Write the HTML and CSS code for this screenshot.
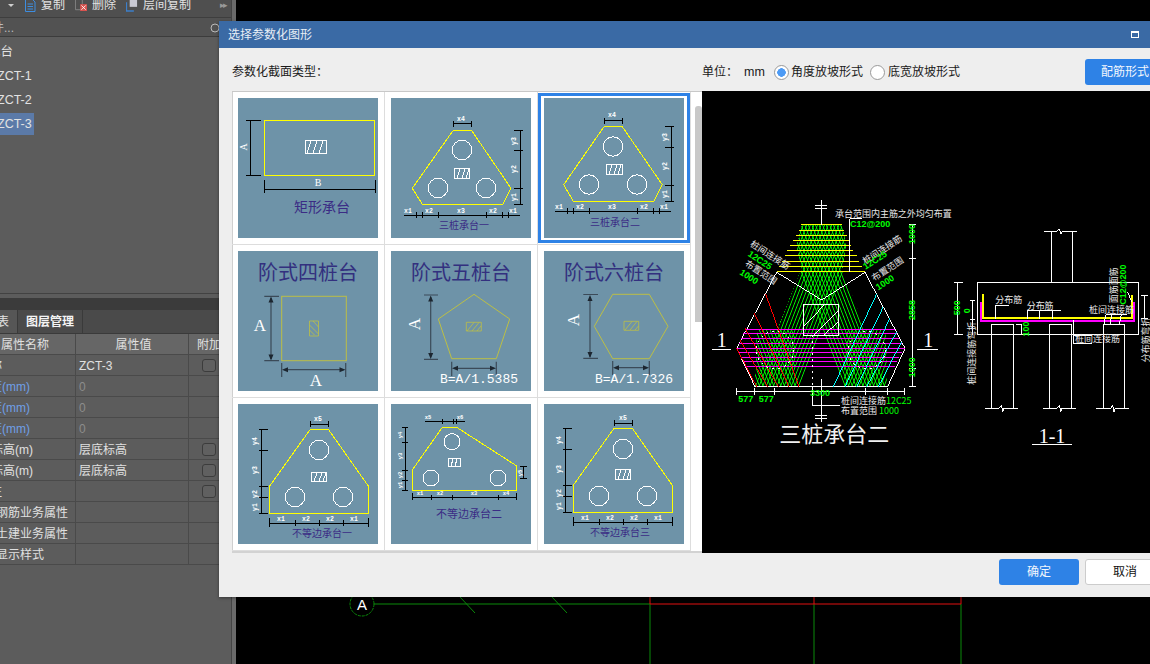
FILE: index.html
```html
<!DOCTYPE html>
<html lang="zh">
<head>
<meta charset="utf-8">
<title>选择参数化图形</title>
<link rel="stylesheet" href="styles.css">
</head>
<body>
<div class="app">
  <aside class="panel">
    <div class="toolbar">
      <div class="toolbar-row">
        <span class="caret"></span>
        <svg class="tool-icon" viewBox="0 0 12 14"><path d="M1.500.500h6l3.500 3.500v9.500h-9.500zM3.500 6h5.500M3.500 8.500h5.500M3.500 11h5.500" fill="none" stroke="#3d8de0"/></svg>
        <span class="tool-label">复制</span>
        <svg class="tool-icon" viewBox="0 0 14 14"><path d="M.500.500h8v12h-8z" fill="none" stroke="#8a8a8a"/><rect x="6" y="6" width="8" height="8" fill="#d9534f"/><path d="M7.500 7.500l5 5M12.500 7.500l-5 5" stroke="#fff"/></svg>
        <span class="tool-label">删除</span>
        <svg class="tool-icon" viewBox="0 0 13 14"><rect x="4" y="0" width="8" height="9" fill="#c9c9d2"/><path d="M.500 4v9.500h8" fill="none" stroke="#3d7fc9" stroke-width="1.500"/></svg>
        <span class="tool-label">层间复制</span>
        <span class="more">▸▸</span>
      </div>
    </div>
    <div class="search"><span class="search-text">件...</span><svg class="search-icon" viewBox="0 0 10 10"><circle cx="5" cy="5" r="4" fill="none" stroke="#bbb"/></svg></div>
    <div class="tree">
      <div class="tree-row cut-cjk">承台</div>
      <div class="tree-row cut-latin">ZCT-1</div>
      <div class="tree-row cut-latin">ZCT-2</div>
      <div class="tree-row cut-latin is-current">ZCT-3</div>
    </div>
    <div class="splitter"></div>
    <div class="tabs">
      <span class="tab tab-cut"><i class="o39">属性列表</i></span>
      <span class="tab tab-on">图层管理</span>
    </div>
    <div class="grid-table">
      <div class="tr th"><span class="td n">属性名称</span><span class="td v">属性值</span><span class="td x">附加</span></div>
      <div class="tr"><span class="td n"><i class="o22">名称</i></span><span class="td v">ZCT-3</span><span class="td x"><b class="check"></b></span></div>
      <div class="tr"><span class="td n link"><i class="o22">长度(mm)</i></span><span class="td v dim-val">0</span><span class="td x"></span></div>
      <div class="tr"><span class="td n link"><i class="o22">宽度(mm)</i></span><span class="td v dim-val">0</span><span class="td x"></span></div>
      <div class="tr"><span class="td n link"><i class="o22">高度(mm)</i></span><span class="td v dim-val">0</span><span class="td x"></span></div>
      <div class="tr"><span class="td n"><i class="o9">标高(m)</i></span><span class="td v">层底标高</span><span class="td x"><b class="check"></b></span></div>
      <div class="tr"><span class="td n"><i class="o9">标高(m)</i></span><span class="td v">层底标高</span><span class="td x"><b class="check"></b></span></div>
      <div class="tr"><span class="td n"><i class="o10">注</i></span><span class="td v"></span><span class="td x"><b class="check"></b></span></div>
      <div class="tr"><span class="td n"><i class="o4">钢筋业务属性</i></span><span class="td v"></span><span class="td x"></span></div>
      <div class="tr"><span class="td n"><i class="o4">土建业务属性</i></span><span class="td v"></span><span class="td x"></span></div>
      <div class="tr"><span class="td n"><i class="o4">显示样式</i></span><span class="td v"></span><span class="td x"></span></div>
    </div>
  </aside>
  <div class="strip"></div>
  <main class="canvas">
    <svg class="plan" viewBox="0 0 914 664" aria-hidden="true">
      <g transform="translate(-236 0)">
        <circle cx="362" cy="604" r="12" fill="none" stroke="#0a8a0a" stroke-dasharray="3 1"/>
        <path d="M374 604H650M460 597l15 16M552 597l15 16M650 604V664M814 604V664M961 604V664" stroke="#0a8a0a" fill="none"/>
        <path d="M650 597V604H961V597M814 597V604" stroke="#e01010" fill="none"/>
        <text class="plan-a" x="362" y="610" text-anchor="middle">A</text>
      </g>
    </svg>
  </main>
</div>

<section class="dialog">
  <header class="dialog-title">
    <span>选择参数化图形</span>
    <span class="maximize"></span>
  </header>
  <div class="options">
    <span class="opt-label">参数化截面类型：</span>
    <span class="unit">单位：</span>
    <span class="unit-val">mm</span>
    <span class="radio on"></span><span class="radio-text">角度放坡形式</span>
    <span class="radio"></span><span class="radio-text">底宽放坡形式</span>
    <button class="btn btn-blue btn-form">配筋形式</button>
  </div>
  <div class="content">
    <div class="list">
      <div class="cells">

        <div class="cell"><div class="frame"><svg class="thumb" viewBox="0 0 140 140">
          <path class="k" d="M12 22V77M8 22H23M8 77H23M26.500 91H137M26.500 82V95M137 82V95"/>
          <rect class="yl" x="26.500" y="22.500" width="110" height="55"/>
          <path class="wh" d="M67.500 42.500h21v13h-21zM69 55l4-12M75 55l4-12M81 55l4-12"/>
          <text class="lbl" transform="translate(9 49) rotate(-90)" text-anchor="middle">A</text>
          <text class="lbl" x="80" y="88" text-anchor="middle">B</text>
          <text class="cap cap14" x="84" y="114" text-anchor="middle">矩形承台</text>
        </svg></div></div>

        <div class="cell"><div class="frame"><svg class="thumb" viewBox="0 0 140 140">
          <path class="yl" d="M62 32.700H80.700L120 90.300 112 106.300H31.300L21.300 90.300Z"/>
          <circle class="wh" cx="71" cy="52" r="9.700"/><circle class="wh" cx="47" cy="90" r="9.700"/><circle class="wh" cx="95" cy="90" r="9.700"/>
          <path class="wh" d="M63.500 70.500h15v10h-15zM66 80l3-9M71 80l3-9M75 80l3-9"/>
          <path class="k" d="M62 25.700H80.700M62 23V29M80.700 23V29M129.300 32.700V106.300M123 32.700H132M123 52.700H132M123 90.300H132M123 106.300H132M13 117.300H128.700M25.300 114V120M31.300 114V120M47.300 114V120M95.300 114V120M111.300 114V120M117.300 114V120"/>
          <text class="tiny" x="70" y="22.500" text-anchor="middle">x4</text>
          <text class="tiny" transform="translate(125 43) rotate(-90)" text-anchor="middle">y3</text>
          <text class="tiny" transform="translate(125 71) rotate(-90)" text-anchor="middle">y2</text>
          <text class="tiny" transform="translate(125 99) rotate(-90)" text-anchor="middle">y1</text>
          <text class="tiny" x="17" y="114.500" text-anchor="middle">x1</text><text class="tiny" x="38" y="114.500" text-anchor="middle">x2</text><text class="tiny" x="70" y="114.500" text-anchor="middle">x3</text><text class="tiny" x="102" y="114.500" text-anchor="middle">x2</text><text class="tiny" x="122" y="114.500" text-anchor="middle">x1</text>
          <text class="cap cap10" x="73" y="131" text-anchor="middle">三桩承台一</text>
        </svg></div></div>

        <div class="cell"><div class="frame selected"><svg class="thumb" viewBox="0 0 140 140">
          <path class="yl" d="M60 28.700H78.300L118.300 86.700 110 103.300H29.300L19.700 86.700Z"/>
          <circle class="wh" cx="69" cy="48.500" r="9.700"/><circle class="wh" cx="45" cy="86.500" r="9.700"/><circle class="wh" cx="93" cy="86.500" r="9.700"/>
          <path class="wh" d="M62.500 66.500h16v10h-16zM65 76l3-9M70 76l3-9M74 76l3-9"/>
          <path class="k" d="M60 22.500H78.300M60 19.500V25.500M78.300 19.500V25.500M127.500 28.700V103.300M121 28.700H130M121 49H130M121 87H130M121 103.300H130M11 113.500H127M23.300 110V116M29.300 110V116M45.300 110V116M93.300 110V116M109.300 110V116M115.300 110V116"/>
          <text class="tiny" x="68" y="19" text-anchor="middle">x4</text>
          <text class="tiny" transform="translate(123 39) rotate(-90)" text-anchor="middle">y3</text>
          <text class="tiny" transform="translate(123 68) rotate(-90)" text-anchor="middle">y2</text>
          <text class="tiny" transform="translate(123 96) rotate(-90)" text-anchor="middle">y1</text>
          <text class="tiny" x="15" y="110.500" text-anchor="middle">x1</text><text class="tiny" x="36" y="110.500" text-anchor="middle">x2</text><text class="tiny" x="68" y="110.500" text-anchor="middle">x3</text><text class="tiny" x="100" y="110.500" text-anchor="middle">x2</text><text class="tiny" x="120" y="110.500" text-anchor="middle">x1</text>
          <text class="cap cap10" x="71" y="127.500" text-anchor="middle">三桩承台二</text>
        </svg></div></div>

        <div class="cell"><div class="frame"><svg class="thumb soft" viewBox="0 0 140 140">
          <text class="cap big" x="70" y="29" text-anchor="middle">阶式四桩台</text>
          <rect class="ol" x="43.700" y="45.300" width="64.600" height="64.400"/>
          <path class="hat" d="M71.500 70h9v15h-9zM71.500 74l9 9M71.500 79l5 5M75 70l5.500 6"/>
          <path class="dm" d="M33 47V108M26.300 45.300H41M26.300 109.700H41M46 118.700H106M43.700 112V126M107.700 112V126"/>
          <path class="ar" d="M33 45.500l-2.500 6h5zM33 109.500l-2.500-6h5zM44 118.700l6-2.500v5zM107.500 118.700l-6-2.500v5z"/>
          <text class="big-a" x="22" y="80" text-anchor="middle">A</text>
          <text class="big-a" x="78" y="135" text-anchor="middle">A</text>
        </svg></div></div>

        <div class="cell"><div class="frame"><svg class="thumb soft" viewBox="0 0 140 140">
          <text class="cap big" x="70" y="29" text-anchor="middle">阶式五桩台</text>
          <path class="ol" d="M83 43.300L118.700 68 105.300 107.700H60.700L47.300 68Z"/>
          <path class="hat" d="M75.300 71.300h15v8.700h-15zM76 80l7-8.500M81 80l7-8.500M86 80l4-5"/>
          <path class="dm" d="M39.700 46V106M33 44H47M33 108.300H47M63 117.300H103M60.700 110.700V125M105.300 110.700V125"/>
          <path class="ar" d="M39.700 44.500l-2.500 6h5zM39.700 108l-2.500-6h5zM61 117.300l6-2.500v5zM105 117.300l-6-2.500v5z"/>
          <text class="big-a" transform="translate(29 73) rotate(-90)" text-anchor="middle">A</text>
          <text class="formula" x="49" y="132">B=A/1.5385</text>
        </svg></div></div>

        <div class="cell"><div class="frame"><svg class="thumb soft" viewBox="0 0 140 140">
          <text class="cap big" x="70" y="29" text-anchor="middle">阶式六桩台</text>
          <path class="ol" d="M68.700 43.300H105.300L124 75.300 105.300 107.700H68.700L50.300 75.300Z"/>
          <path class="hat" d="M80 70.300h14.700v9h-14.700zM81 79l7-8.500M86 79l7-8.500M91 79l3.500-4"/>
          <path class="dm" d="M46 46V106M39.300 43.500H54M39.300 107.300H54M71 116.700H103M68.700 110V124M105.300 110V124"/>
          <path class="ar" d="M46 44l-2.500 6h5zM46 107l-2.500-6h5zM69 116.700l6-2.500v5zM105 116.700l-6-2.500v5z"/>
          <text class="big-a" transform="translate(35 69) rotate(-90)" text-anchor="middle">A</text>
          <text class="formula" x="51" y="132">B=A/1.7326</text>
        </svg></div></div>

        <div class="cell"><div class="frame"><svg class="thumb" viewBox="0 0 140 140">
          <path class="yl" d="M72.300 25.300H90.300L130.300 82V109.300H31.700V82Z"/>
          <circle class="wh" cx="81" cy="46" r="9.700"/><circle class="wh" cx="57" cy="93" r="9.700"/><circle class="wh" cx="105" cy="93" r="9.700"/>
          <path class="wh" d="M73.500 68.500h15v9.200h-15zM76 77l3-8M81 77l3-8M85 77l3-8"/>
          <path class="k" d="M72.300 20H90.300M72.300 17V23M90.300 17V23M23.700 25.300V109.300M21 25.300H29.700M21 46.300H29.700M21 82.700H29.700M21 93.700H29.700M21 109.300H29.700M31.700 119.300H130.300M31.700 114V123M57.700 116V122M81.700 116V122M105.700 116V122M130.300 114V123"/>
          <text class="tiny" x="80" y="16.500" text-anchor="middle">x5</text>
          <text class="tiny" transform="translate(19 37) rotate(-90)" text-anchor="middle">y4</text>
          <text class="tiny" transform="translate(19 66) rotate(-90)" text-anchor="middle">y3</text>
          <text class="tiny" transform="translate(19 90) rotate(-90)" text-anchor="middle">y2</text>
          <text class="tiny" transform="translate(19 103) rotate(-90)" text-anchor="middle">y1</text>
          <text class="tiny" x="43" y="117" text-anchor="middle">x1</text><text class="tiny" x="68" y="117" text-anchor="middle">x2</text><text class="tiny" x="92" y="117" text-anchor="middle">x2</text><text class="tiny" x="116" y="117" text-anchor="middle">x1</text>
          <text class="cap cap10" x="84" y="133" text-anchor="middle">不等边承台一</text>
        </svg></div></div>

        <div class="cell"><div class="frame"><svg class="thumb" viewBox="0 0 140 140">
          <path class="yl" d="M51.300 23.300H65.700L125.300 61.700V86.300H21.300V66Z"/>
          <circle class="wh" cx="61" cy="37.700" r="8"/><circle class="wh" cx="40" cy="74" r="8"/><circle class="wh" cx="107" cy="74" r="8"/>
          <path class="wh" d="M57.500 54.500h11.500v8h-11.500zM60 62l2-7M64 62l2-7"/>
          <path class="k" d="M34 17H74M51.300 15V20M62.300 15V20M65.700 15V20M14.700 23.300V86.300M11 23.300H17M11 38.300H17M11 66H17M11 76H17M11 86.300H17M21.300 93.700H125.300M21.300 89V96M40.300 91V96M61.300 91V96M107.300 91V96M125.300 89V96M132.700 62V74M129 62H136M129 74H136"/>
          <text class="tiny mini" x="37" y="15" text-anchor="middle">x5</text><text class="tiny mini" x="69" y="15" text-anchor="middle">x6</text>
          <text class="tiny mini" transform="translate(11 31) rotate(-90)" text-anchor="middle">y4</text>
          <text class="tiny mini" transform="translate(11 52) rotate(-90)" text-anchor="middle">y3</text>
          <text class="tiny mini" transform="translate(11 71) rotate(-90)" text-anchor="middle">y2</text>
          <text class="tiny mini" transform="translate(11 81) rotate(-90)" text-anchor="middle">y1</text>
          <text class="tiny mini" transform="translate(131 69) rotate(-90)" text-anchor="middle">y5</text>
          <text class="tiny mini" x="29" y="91" text-anchor="middle">x1</text><text class="tiny mini" x="49" y="91" text-anchor="middle">x2</text><text class="tiny mini" x="83" y="91" text-anchor="middle">x3</text><text class="tiny mini" x="115" y="91" text-anchor="middle">x4</text>
          <text class="cap cap11" x="78" y="114" text-anchor="middle">不等边承台二</text>
        </svg></div></div>

        <div class="cell"><div class="frame"><svg class="thumb" viewBox="0 0 140 140">
          <path class="yl" d="M70 24.300H88.300L128.300 81.300V108.300H29.300V81.300Z"/>
          <circle class="wh" cx="79" cy="45" r="9.700"/><circle class="wh" cx="55" cy="92" r="9.700"/><circle class="wh" cx="103" cy="92" r="9.700"/>
          <path class="wh" d="M71.500 65.500h15v10h-15zM74 75l3-9M79 75l3-9M83 75l3-9"/>
          <path class="k" d="M70 19H88.300M70 16V22M88.300 16V22M21.700 24.300V108.300M19 24.300H27.700M19 45.300H27.700M19 81.700H27.700M19 92.700H27.700M19 108.300H27.700M29.300 118.300H128.300M29.300 113V122M55.700 115V121M79.700 115V121M103.700 115V121M128.300 113V122"/>
          <text class="tiny" x="79" y="15.500" text-anchor="middle">x5</text>
          <text class="tiny" transform="translate(17 36) rotate(-90)" text-anchor="middle">y4</text>
          <text class="tiny" transform="translate(17 65) rotate(-90)" text-anchor="middle">y3</text>
          <text class="tiny" transform="translate(17 89) rotate(-90)" text-anchor="middle">y2</text>
          <text class="tiny" transform="translate(17 102) rotate(-90)" text-anchor="middle">y1</text>
          <text class="tiny" x="41" y="116" text-anchor="middle">x1</text><text class="tiny" x="66" y="116" text-anchor="middle">x2</text><text class="tiny" x="90" y="116" text-anchor="middle">x2</text><text class="tiny" x="114" y="116" text-anchor="middle">x1</text>
          <text class="cap cap10" x="76" y="132" text-anchor="middle">不等边承台三</text>
        </svg></div></div>

      </div>
      <div class="scroll-thumb"></div>
    </div>

    <div class="preview">
      <svg class="cad" viewBox="0 0 448 462" fill="none">
        <defs>
          <pattern id="hatchL" width="10" height="10" patternUnits="userSpaceOnUse" patternTransform="rotate(21)"><rect width="3" height="10" fill="#0f0"/></pattern>
          <pattern id="hatchR" width="10" height="10" patternUnits="userSpaceOnUse" patternTransform="rotate(-21)"><rect width="3" height="10" fill="#0f0"/></pattern>
        </defs>
        <g transform="translate(-2 104) scale(.33333)">
          <path d="M300 230H430L300 575H165Z" fill="url(#hatchL)"/>
          <path d="M300 230H430L563 575H430Z" fill="url(#hatchR)"/>
          <path d="M305 90H425L440 150 425 232H305L290 150Z" fill="url(#hatchL)"/>
          <path d="M305 90H425L440 150 425 232H305L290 150Z" fill="url(#hatchR)"/>
          <path d="M170 405H285V575H165Z" fill="url(#hatchR)"/>
          <path d="M440 405H558L563 575H430Z" fill="url(#hatchL)"/>
          <path class="s-y" d="M302 90H425M296 106H431M287 122H440M278 138H448M270 153H452M262 168H460M254 183H470M246 199H478M238 214H486M232 230H495"/>
          <path class="s-w" d="M230 232L110 460 165 575H563L615 460 495 232M230 232L365 315 495 232"/>
          <path class="s-m" d="M135 403H585M128 417H592M122 431H598M116 445H606M110 460H615M116 473H606M122 487H598M128 501H592M135 515H585"/>
          <path class="s-r" d="M197 297L297 575M163 355L267 575M135 400L235 575M120 435L203 575M110 460L170 575"/>
          <path class="s-c" d="M530 297L400 575M550 335L435 575M570 370L470 575M590 410L500 575M605 440L535 575"/>
          <circle class="s-d" cx="225" cy="465" r="56"/><circle class="s-d" cx="500" cy="465" r="56"/>
          <path class="s-w" d="M310 328H416V421H310ZM310 395L375 328M340 421L416 345M370 421L416 380"/>
          <path class="s-w" d="M365 15V90M346 33H382M346 40H382M365 552V680M346 662H382M346 670H382"/>
          <path class="s-d" d="M337 421V575"/>
          <path class="s-w" d="M337 575V632H420"/>
          <path class="s-w" d="M450 232V72H485"/>
          <path class="s-w" d="M638 90V575M627 90H648M627 192H648M627 520H648M627 575H648M110 590H615M110 580V600M165 580V600M225 580V600M497 580V600M563 580V600M615 580V600"/>
          <path class="s-w" d="M37 463H93M652 463H715"/>
          <text class="c-w" x="405" y="65">承台范围内主筋之外均匀布置</text>
          <text class="c-g" x="450" y="97">C12@200</text>
          <text class="c-g" transform="translate(645 117) rotate(-90)" text-anchor="middle">1000</text>
          <text class="c-g" transform="translate(645 345) rotate(-90)" text-anchor="middle">2858</text>
          <text class="c-g" transform="translate(645 517) rotate(-90)" text-anchor="middle">1000</text>
          <text class="c-w" transform="translate(205 188) rotate(33)" text-anchor="middle">桩间连接筋</text>
          <text class="c-g" transform="translate(175 203) rotate(33)" text-anchor="middle">12C25</text>
          <text class="c-w" transform="translate(178 240) rotate(33)" text-anchor="middle">布置范围</text>
          <text class="c-g" transform="translate(142 253) rotate(33)" text-anchor="middle">1000</text>
          <text class="c-w" transform="translate(552 172) rotate(-33)" text-anchor="middle">桩间连接筋</text>
          <text class="c-g" transform="translate(530 203) rotate(-33)" text-anchor="middle">12C25</text>
          <text class="c-w" transform="translate(568 230) rotate(-33)" text-anchor="middle">布置范围</text>
          <text class="c-g" transform="translate(560 270) rotate(-33)" text-anchor="middle">1000</text>
          <text class="c-g" x="115" y="620">577</text><text class="c-g" x="176" y="620">577</text>
          <text class="c-g" x="360" y="603" text-anchor="middle">3300</text>
          <text class="c-w" x="423" y="627">桩间连接筋<tspan class="g-fill">12C25</tspan></text>
          <text class="c-w" x="423" y="657">布置范围 <tspan class="g-fill">1000</tspan></text>
          <text class="c-t" x="65" y="456" text-anchor="middle">1</text>
          <text class="c-t" x="685" y="456" text-anchor="middle">1</text>
          <text class="c-title" x="403" y="741" text-anchor="middle">三桩承台二</text>
        </g>
        <g transform="translate(228 129) scale(.33333)">
          <path class="s-w" d="M142 187H626V344H142ZM364 187V35M427 187V35M342 34H382L388 26 392 42 398 34H440"/>
          <path class="s-w" d="M184 313V565M250 313V565M358 313H425M358 313V565M425 313V565M520 313V565M584 313V565M184 313H250M520 313H584M165 565H208L214 555 218 575 222 565H264M339 565H382L388 555 392 575 396 565H438M498 565H542L548 555 552 575 556 565H596"/>
          <path class="s-w" d="M83 187V344M72 187H98M72 344H98M127 243V344M120 243H135M120 300H135M634 226H654M634 296H654M644 226V296"/>
          <path class="s-m2" d="M153 245V302H611V245"/>
          <path class="s-y2" d="M159 222V295H606V225"/>
          <path class="s-w" d="M198 297V256H237M292 297V272H392M330 297V272M368 297V272M430 300V372H486M430 348H486M522 312L528 284H590M540 312L546 284M568 312L574 284M592 216L606 245M258 313H275V346"/>
          <text class="c-w" x="196" y="250">分布筋</text>
          <text class="c-w" x="290" y="266">分布筋</text>
          <text class="c-w" x="477" y="279">桩间连接筋</text>
          <text class="c-w" x="435" y="366">桩间连接筋</text>
          <text class="c-w" transform="translate(561 250) rotate(-90)">面筋面筋</text>
          <text class="c-g" transform="translate(588 254) rotate(-90)">C12@200</text>
          <text class="c-g" transform="translate(89 263) rotate(-90)" text-anchor="middle">500</text>
          <text class="c-g" transform="translate(119 272) rotate(-90)" text-anchor="middle">0</text>
          <text class="c-g" transform="translate(297 327) rotate(-90)" text-anchor="middle">100</text>
          <text class="c-w" transform="translate(135 400) rotate(-90)" text-anchor="middle">桩间连接筋弯折</text>
          <text class="c-w" transform="translate(658 360) rotate(-90)" text-anchor="middle">分布筋弯折</text>
          <text class="c-t2" x="366" y="668" text-anchor="middle">1-1</text>
          <path class="s-w" d="M306 673H425"/>
        </g>
      </svg>
    </div>
  </div>
  <footer class="dialog-foot">
    <button class="btn btn-blue btn-ok">确定</button>
    <button class="btn btn-cancel">取消</button>
  </footer>
</section>
</body>
</html>
```
FILE: styles.css
```css
* { box-sizing: border-box; }
html, body { margin: 0; height: 100%; }
body {
  position: relative;
  width: 1150px;
  height: 664px;
  overflow: hidden;
  background: #000;
  font: 12px/1 "Liberation Sans", "Noto Sans CJK SC", sans-serif;
}
.app { display: flex; height: 664px; }

/* left panel */
.panel { width: 232px; flex: none; background: #5c5c5c; color: #e2e2e2; border-right: 1px solid #444; overflow: hidden; display: flex; flex-direction: column; }
.strip { width: 4px; flex: none; background: #6a6a6a; }
.toolbar { height: 18px; flex: none; background: #4f4f4f; border-bottom: 1px solid #3e3e3e; overflow: hidden; }
.toolbar-row { display: flex; align-items: center; height: 18px; margin-top: -4px; padding-left: 8px; }
.caret { width: 0; height: 0; border: 3px solid transparent; border-top: 3px solid #cfcfcf; border-bottom: 0; margin-right: 10px; }
.tool-icon { width: 12px; height: 14px; flex: none; margin-right: 5px; }
.tool-label { margin-right: 10px; white-space: nowrap; }
.more { color: #999; font-size: 9px; margin-left: 19px; letter-spacing: -2px; }
.search { height: 19px; flex: none; background: #525252; border-bottom: 1px solid #3c3c3c; display: flex; align-items: center; color: #bbb; padding-top: 2px; }
.search-text { margin-left: -8px; flex: none; }
.search-icon { width: 10px; height: 10px; margin-left: 196px; flex: none; }
.tree { height: 257px; flex: none; padding-top: 3px; border-bottom: 1px solid #424242; }
.tree-row { height: 24px; line-height: 24px; font-size: 12.500px; }
.cut-cjk { margin-left: -12px; }
.cut-latin { margin-left: -3px; width: 37px; }
.is-current { background: #5b7aa8; height: 22px; line-height: 22px; margin-top: 1px; }
.splitter { height: 12px; flex: none; margin-top: 4px; background: #3b3b3b; }
.tabs { height: 24px; flex: none; display: flex; background: #4a4a4a; border-bottom: 1px solid #3a3a3a; }
.tab { line-height: 24px; white-space: nowrap; }
.tab i { font-style: normal; }
.tab-cut { width: 18px; flex: none; background: #565656; overflow: hidden; border-right: 1px solid #3a3a3a; }
.o39 { margin-left: -39px; }
.tab-on { width: 65px; flex: none; text-align: center; color: #f4f4f4; font-weight: 700; border-right: 1px solid #3a3a3a; }
.grid-table { flex: none; }
.tr { display: grid; grid-template-columns: 76px 113px 43px; height: 21px; }
.td { display: flex; align-items: center; padding-top: 1px; border-bottom: 1px solid #4a4a4a; border-right: 1px solid #4a4a4a; white-space: nowrap; overflow: hidden; color: #e0e0e0; }
.td i { font-style: normal; flex: none; }
.th { background: #666; }
.th .n { padding-left: 1px; }
.th .v { justify-content: center; }
.th .x { padding-left: 8px; }
.v { padding-left: 3px; }
.x { padding-left: 13px; }
.td.link { color: #6f9fe6; }
.td.dim-val { color: #8c8c8c; }
.o22 { margin-left: -22px; }
.o10 { margin-left: -10px; }
.o9 { margin-left: -9px; }
.o4 { margin-left: -4px; }
.check { display: block; width: 14px; height: 13px; background: #606060; border: 1px solid #3c3c3c; border-radius: 3px; }

/* background canvas */
.canvas { flex: 1; position: relative; min-width: 0; }
.plan { display: block; width: 914px; height: 664px; }
.plan-a { font: 15px "Liberation Sans", sans-serif; fill: #fff; }

/* dialog */
.dialog { position: absolute; left: 219px; top: 21px; width: 931px; height: 576px; background: #eee; box-shadow: 0 1px 3px rgba(0, 0, 0, .4); display: flex; flex-direction: column; }
.dialog-title { height: 27px; flex: none; background: #3a6aa5; color: #e8eef5; line-height: 28px; padding: 0 11px 0 9px; display: flex; justify-content: space-between; align-items: center; }
.maximize { width: 8px; height: 7px; border: 1px solid #fff; border-top-width: 2px; }
.options { height: 43px; flex: none; display: flex; align-items: center; padding: 5px 0 0 13px; color: #1a1a1a; white-space: nowrap; }
.options > * { flex: none; }
.opt-label { width: 470px; }
.unit { width: 42px; }
.unit-val { width: 30px; font-size: 12.500px; }
.radio { width: 15px; height: 15px; border: 1px solid #999; border-radius: 50%; background: #fff; margin-right: 3px; }
.radio.on { margin-right: 2px; background: radial-gradient(circle, #4d9bf5 0 4px, #fff 4.500px); }
.radio-text { width: 79px; }
.btn { border: 0; padding: 0; font: inherit; border-radius: 3px; height: 26px; flex: none; }
.btn-blue { background: #2e82e6; color: #f2f7fd; }
.btn-form { width: 85px; margin-left: 118px; text-align: left; padding-left: 16px; }
.content { height: 462px; flex: none; display: flex; padding-left: 13px; }
.list { position: relative; width: 470px; flex: none; height: 462px; background: #fff; border-top: 1px solid #c8c8c8; border-bottom: 2px solid #d2d2d2; box-shadow: inset 1px 0 #cfcfcf; overflow: hidden; }
.cells { display: grid; grid-template-columns: repeat(3, 153px); grid-auto-rows: 153px; }
.cell { border-right: 1px solid #ddd; border-bottom: 1px solid #ddd; display: flex; align-items: center; }
.frame { width: 152px; height: 150px; border: 3px solid transparent; display: flex; align-items: center; justify-content: center; }
.frame.selected { border-color: #2e82e6; }
.thumb { display: block; width: 140px; height: 140px; flex: none; background: #6e93a8; shape-rendering: crispEdges; }
.thumb.soft { shape-rendering: auto; }
.thumb path, .thumb rect, .thumb circle { fill: none; }
.thumb .yl { stroke: #ff0; stroke-width: 1; }
.thumb .k { stroke: #000; stroke-width: 1; }
.thumb .wh { stroke: #fff; stroke-width: 1; }
.thumb .ol { stroke: #bcbf45; stroke-width: 1; }
.thumb .hat { stroke: #bcbf45; stroke-width: .8; }
.thumb .dm { stroke: #3b4a58; stroke-width: 1.200; }
.thumb .ar { fill: #1c2630; stroke: none; }
.lbl { font: 10px "Liberation Serif", serif; fill: #fff; }
.tiny { font: 700 6.500px "Liberation Mono", monospace; fill: #fff; }
.tiny.mini { font-size: 5.500px; }
.cap { fill: #3b2c85; font-family: "Noto Sans CJK SC", sans-serif; }
.cap14 { font-size: 14px; }
.cap10 { font-size: 10px; }
.cap11 { font-size: 11px; }
.big { font-size: 20px; fill: #33307f; }
.big-a { font: 17px "Liberation Serif", serif; fill: #fff; }
.formula { font: 13px "Liberation Mono", monospace; fill: #fff; }
.scroll-thumb { position: absolute; left: 463px; top: 14px; width: 7px; height: 216px; background: #c8c8c8; border-radius: 3px 3px 0 0; }

.preview { flex: 1; background: #000; min-width: 0; overflow: hidden; }
.cad { display: block; width: 448px; height: 462px; shape-rendering: crispEdges; }
.s-w { stroke: #fff; stroke-width: 3; }
.s-y { stroke: #ff0; stroke-width: 3; }
.s-y2 { stroke: #ff0; stroke-width: 6; }
.s-m { stroke: #f0f; stroke-width: 3; }
.s-m2 { stroke: #f0f; stroke-width: 6; }
.s-r { stroke: #f00; stroke-width: 3; }
.s-c { stroke: #0ff; stroke-width: 3; }
.s-d { stroke: #fff; stroke-width: 3; stroke-dasharray: 6 12; }
.c-w { font: 27px "Noto Sans CJK SC", sans-serif; fill: #e8e8e8; }
.c-g { font: 700 27px "Liberation Sans", sans-serif; fill: #0f0; }
.g-fill { fill: #0f0; }
.c-t { font: 60px "Liberation Serif", serif; fill: #fff; }
.c-t2 { font: 60px "Liberation Serif", serif; fill: #fff; }
.c-title { font: 66px "Noto Sans CJK SC", sans-serif; fill: #f0f0f0; }

.dialog-foot { flex: 1; display: flex; align-items: flex-start; padding: 6px 0 0 780px; }
.btn-ok { width: 80px; }
.btn-cancel { width: 80px; margin-left: 6px; background: #fff; border: 1px solid #ccc; color: #111; }
```
